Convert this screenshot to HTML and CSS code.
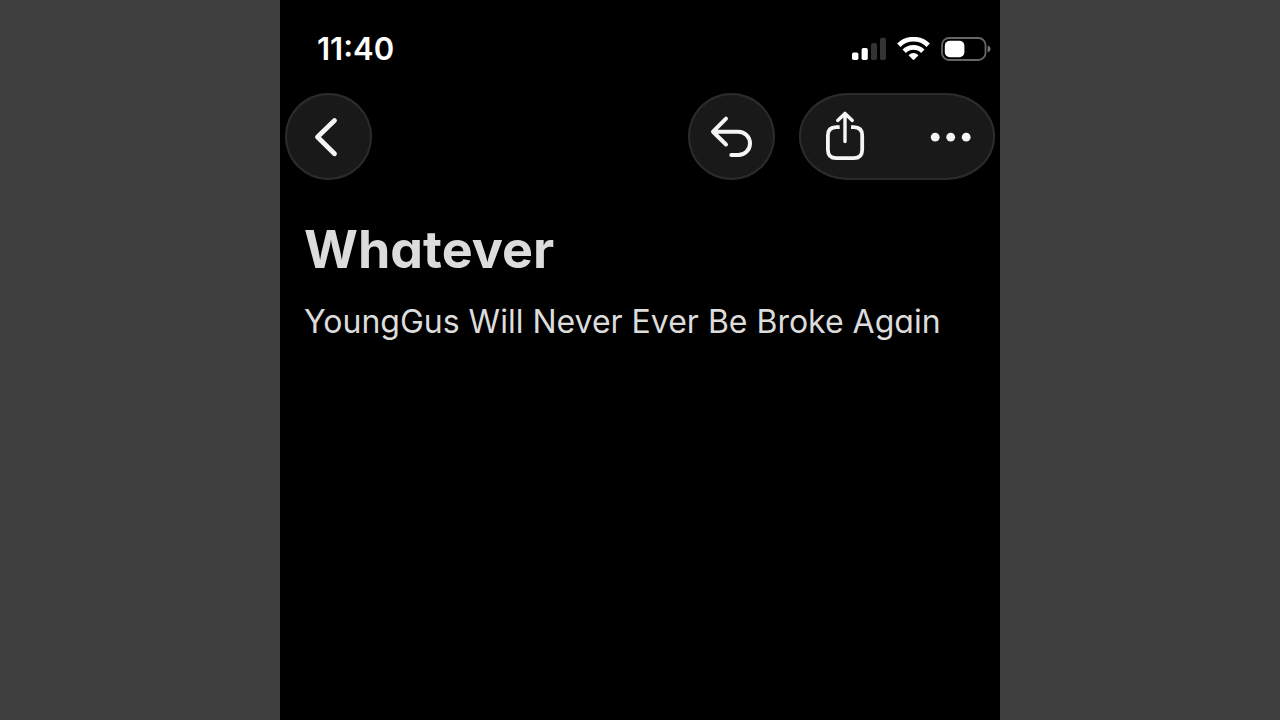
FILE: index.html
```
<!DOCTYPE html>
<html lang="en">
<head>
    <meta charset="UTF-8">
    <meta name="viewport" content="width=device-width, initial-scale=1.0">
    <title>Whatever</title>
    <link rel="stylesheet" href="styles.css">
</head>
<body>
    <div class="phone">
        <div class="status-bar">
            <time class="clock">11:40</time>
            <div class="status-icons">
                <svg class="signal" width="34" height="24" viewBox="0 0 34 24" role="img" aria-label="Signal">
                    <rect x="0" y="15.5" width="6.4" height="7.5" rx="1.7" fill="#fff"/>
                    <rect x="9.6" y="11" width="6.2" height="12" rx="1.7" fill="#fff"/>
                    <rect x="19" y="6" width="6" height="17" rx="1.7" fill="#333"/>
                    <rect x="28" y="0.7" width="6" height="22.3" rx="1.7" fill="#333"/>
                </svg>
                <svg class="wifi" width="33" height="24" viewBox="0 0 33 24" role="img" aria-label="Wi-Fi">
                    <g fill="none" stroke="#fff" stroke-width="4.8">
                        <path d="M1.8 8.2A21 21 0 0 1 31.2 8.2"/>
                        <path d="M7.2 14.2A13.2 13.2 0 0 1 25.8 14.2"/>
                    </g>
                    <path d="M11.8 17.9A6.8 6.8 0 0 1 21.2 17.9Q21.4 18.4 21 18.8L17.3 22.6Q16.5 23.3 15.7 22.6L12 18.8Q11.6 18.4 11.8 17.9Z" fill="#fff"/>
                </svg>
                <svg class="battery" width="50" height="24" viewBox="0 0 50 24" role="img" aria-label="Battery">
                    <rect x="1" y="1" width="43.5" height="22" rx="7" fill="none" stroke="#666" stroke-width="1.8"/>
                    <rect x="3.8" y="3.8" width="19.6" height="16.4" rx="5" fill="#fff"/>
                    <path d="M46.7 8.6Q49.6 9.6 49.6 12T46.7 15.4Z" fill="#777"/>
                </svg>
            </div>
        </div>

        <nav class="toolbar">
            <button class="round-btn" type="button" aria-label="Back">
                <svg width="87" height="87" viewBox="0 0 87 87">
                    <path d="M49.5 27.5L32.5 44L49.5 60.7" stroke-width="4.8"/>
                </svg>
            </button>
            <button class="round-btn undo-btn" type="button" aria-label="Undo">
                <svg width="87" height="87" viewBox="0 0 87 87">
                    <path d="M38 25.7L25 38.7L38 51.5M25 38.7H50.3A11.7 11.7 0 0 1 50.3 62.1H43.3" stroke-width="4"/>
                </svg>
            </button>
            <div class="btn-group">
                <button type="button" aria-label="Share">
                    <svg width="98" height="87" viewBox="0 0 98 87">
                        <path d="M40.7 34.2H37.3Q28.9 34.2 28.9 42.6V56.8Q28.9 65.2 37.3 65.2H54.8Q63.2 65.2 63.2 56.8V42.6Q63.2 34.2 54.8 34.2H52" stroke-width="3.8" stroke-linecap="butt"/>
                        <path d="M46 48.5V20.5M38.7 27.4L46 20.4L53.3 27.4" stroke-width="3.4"/>
                    </svg>
                </button>
                <button type="button" aria-label="More">
                    <svg width="98" height="87" viewBox="0 0 98 87">
                        <g class="dots">
                            <circle cx="38.2" cy="44.2" r="4.4"/>
                            <circle cx="53.7" cy="44.2" r="4.4"/>
                            <circle cx="69.2" cy="44.2" r="4.4"/>
                        </g>
                    </svg>
                </button>
            </div>
        </nav>

        <main class="note">
            <h1>Whatever</h1>
            <p>YoungGus Will Never Ever Be Broke Again</p>
        </main>
    </div>
</body>
</html>
```
FILE: styles.css
```
* {
    margin: 0;
    padding: 0;
    box-sizing: border-box;
}

body {
    font-family: Inter, "Liberation Sans", sans-serif;
    background: #404040;
    min-height: 100vh;
}

.phone {
    max-width: 720px;
    min-height: 100vh;
    margin: 0 auto;
    padding-top: 31px;
    background: #000;
    color: #dcdcdc;
}

.status-bar {
    display: flex;
    justify-content: space-between;
    align-items: center;
    padding: 0 9px 0 37px;
    margin-bottom: 26px;
}

.clock {
    font-size: 31px;
    line-height: 36px;
    font-weight: 600;
    color: #fff;
}

.status-icons {
    display: flex;
    gap: 11px;
}

.toolbar {
    display: flex;
    align-items: center;
    padding: 0 5px;
}

button {
    border: none;
    background: none;
    color: #f5f5f5;
    cursor: pointer;
}

.round-btn,
.btn-group {
    background: #191919;
    box-shadow: inset 0 0 0 2px #2b2b2b;
    overflow: hidden;
}

.round-btn {
    border-radius: 50%;
}

.undo-btn {
    margin-left: auto;
    margin-right: 24px;
}

.btn-group {
    display: flex;
    border-radius: 50px / 44px;
}

svg {
    display: block;
}

button svg {
    fill: none;
    stroke: currentColor;
    stroke-linecap: round;
    stroke-linejoin: round;
}

.dots {
    fill: currentColor;
    stroke: none;
}

.note {
    padding: 38px 24px;
    font-feature-settings: "cv11";
}

.note h1 {
    font-size: 52px;
    line-height: 64px;
    font-weight: 700;
    margin-bottom: 18px;
}

.note p {
    font-size: 32px;
    line-height: 44px;
}
```
